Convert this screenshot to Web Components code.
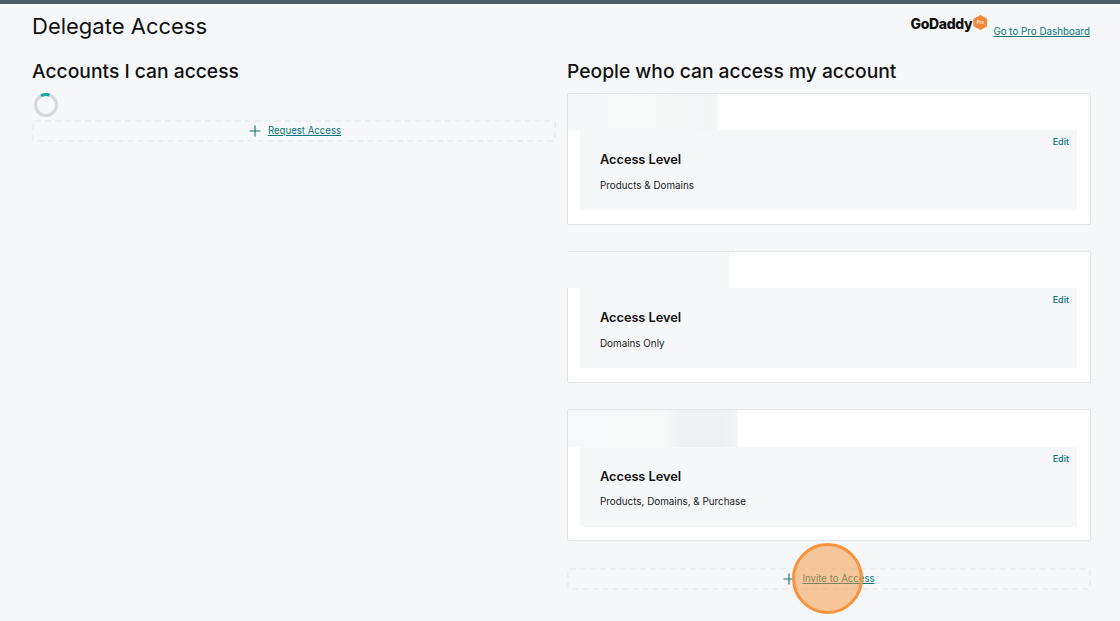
<!DOCTYPE html>
<html>
<head>
<meta charset="utf-8">
<title>Delegate Access</title>
<style>
	html, body { margin: 0; padding: 0; height: 100%; }
	body {
		background: #f5f7f8;
		color: #111;
		font-family: Inter, "Liberation Sans", sans-serif;
		overflow: hidden;
	}
</style>
</head>
<body>
<delegate-page>
	<page-header slot="header" title="Delegate Access" link="Go to Pro Dashboard"></page-header>
	<access-column slot="left" title="Accounts I can access">
		<load-spinner></load-spinner>
		<add-box label="Request Access"></add-box>
	</access-column>
	<access-column slot="right" title="People who can access my account">
		<access-card level="Products &amp; Domains" mask="one"></access-card>
		<access-card level="Domains Only" mask="two"></access-card>
		<access-card level="Products, Domains, &amp; Purchase" mask="three"></access-card>
		<add-box label="Invite to Access" invite></add-box>
	</access-column>
	<click-marker></click-marker>
</delegate-page>

<script>
const TEAL = '#09757a';

class DelegatePage extends HTMLElement {
	constructor() {
		super();
		const shadowRoot = this.attachShadow({ mode: 'open' });
		shadowRoot.innerHTML = `
			<style>
				:host {
					display: block;
					position: relative;
					height: 621px;
					box-sizing: border-box;
					border-top: 4px solid #4a5c65;
				}
				.main {
					display: grid;
					grid-template-columns: 524px 524px;
					column-gap: 11px;
					padding: 0 29px 0 32px;
				}
			</style>
			<slot name="header"></slot>
			<div class="main">
				<slot name="left"></slot>
				<slot name="right"></slot>
			</div>
			<slot></slot>
		`;
	}
}

class PageHeader extends HTMLElement {
	constructor() {
		super();
		const shadowRoot = this.attachShadow({ mode: 'open' });
		shadowRoot.innerHTML = `
			<style>
				:host {
					display: flex;
					justify-content: space-between;
					height: 51px;
					padding: 0 30px 0 32px;
				}
				h1 {
					margin: 7px 0 0;
					font-size: 22px;
					line-height: 30px;
					font-weight: 400;
					color: #111;
				}
				.right {
					display: flex;
					align-items: flex-start;
					padding-top: 10px;
				}
				.logo {
					font-size: 14px;
					line-height: 20px;
					font-weight: 800;
					letter-spacing: -0.35px;
					color: #111;
				}
				.pro {
					width: 14px;
					height: 15px;
					margin: 1px 0 0 1px;
					background: #f08a3c;
					clip-path: polygon(50% 0, 100% 25%, 100% 75%, 50% 100%, 0 75%, 0 25%);
					color: #ffe4c9;
					font-size: 4.5px;
					font-weight: 700;
					line-height: 15px;
					text-align: center;
				}
				a {
					margin: 11px 0 0 6px;
					color: ${TEAL};
					font-size: 9.8px;
					line-height: 14px;
					text-decoration: underline;
				}
			</style>
			<h1>${this.getAttribute('title')}</h1>
			<div class="right">
				<span class="logo">GoDaddy</span>
				<span class="pro">Pro</span>
				<a href="#">${this.getAttribute('link')}</a>
			</div>
		`;
	}
}

class AccessColumn extends HTMLElement {
	constructor() {
		super();
		const shadowRoot = this.attachShadow({ mode: 'open' });
		shadowRoot.innerHTML = `
			<style>
				:host { display: block; min-width: 0; }
				h2 {
					margin: 3px 0 9px;
					font-size: 19.25px;
					line-height: 26px;
					font-weight: 500;
					color: #111;
				}
				.body { display: flex; flex-direction: column; }
			</style>
			<h2>${this.getAttribute('title')}</h2>
			<div class="body"><slot></slot></div>
		`;
	}
}

class AccessCard extends HTMLElement {
	constructor() {
		super();
		const shadowRoot = this.attachShadow({ mode: 'open' });
		shadowRoot.innerHTML = `
			<style>
				:host {
					display: block;
					height: 131.6px;
					box-sizing: border-box;
					margin-bottom: 26.55px;
					background: #fff;
					border: 1px solid #e1e4e6;
					border-radius: 2px;
					position: relative;
				}
				.mask { height: 36.3px; }
				.mask.one { width: 149px; background: linear-gradient(90deg, #f6f7f8 0, #f7f8f8 50%, #f4f5f6 100%); }
				.mask.two { width: 163px; margin-left: -2px; background: #f6f7f8; }
				.mask.three { width: 169px; background: linear-gradient(90deg, #f7f8f9 0, #f7f8f8 55%, #eeeff0 68%, #eeeff0 92%, #f2f3f4 100%); }
				.panel {
					display: flex;
					justify-content: space-between;
					height: 80px;
					margin: 0 13px 0 12px;
					padding: 0 8px 0 20px;
					background: #f5f7f8;
				}
				h3 {
					margin: 21px 0 0;
					font-size: 12.8px;
					line-height: 18px;
					font-weight: 600;
					letter-spacing: -0.05px;
					color: #111;
				}
				p {
					margin: 8.5px 0 0;
					font-size: 9.85px;
					line-height: 14px;
					color: #222;
				}
				a {
					margin-top: 6px;
					color: ${TEAL};
					font-size: 9px;
					line-height: 12px;
					font-weight: 500;
					text-decoration: none;
				}
			</style>
			<div class="mask ${this.getAttribute('mask')}"></div>
			<div class="panel">
				<div>
					<h3>Access Level</h3>
					<p>${this.getAttribute('level').replace(/&/g, '&amp;')}</p>
				</div>
				<a href="#">Edit</a>
			</div>
		`;
	}
}

class AddBox extends HTMLElement {
	constructor() {
		super();
		const shadowRoot = this.attachShadow({ mode: 'open' });
		shadowRoot.innerHTML = `
			<style>
				:host {
					display: flex;
					justify-content: center;
					align-items: center;
					gap: 7px;
					height: 22px;
					box-sizing: border-box;
					margin-top: 1px;
					padding-left: 2px;
					border: 2px dashed #ebedee;
					border-radius: 3px;
				}
				:host([invite]) { margin-top: 0.5px; padding-left: 0; }
				svg { display: block; }
				a {
					color: ${TEAL};
					font-size: 9.65px;
					line-height: 14px;
					text-decoration: underline;
				}
			</style>
			<svg width="12" height="12" viewBox="0 0 12 12" fill="none" stroke="#1f6f75" stroke-width="1.1">
				<path d="M6 0.5V11.5M0.5 6H11.5"/>
			</svg>
			<a href="#">${this.getAttribute('label')}</a>
		`;
	}
}

class LoadSpinner extends HTMLElement {
	constructor() {
		super();
		const shadowRoot = this.attachShadow({ mode: 'open' });
		shadowRoot.innerHTML = `
			<style>
				:host { display: block; height: 26px; margin-left: 2px; }
				svg { display: block; }
			</style>
			<svg width="24" height="24" viewBox="0 0 24 24" fill="none" stroke-width="3">
				<circle cx="12" cy="12" r="10.5" stroke="#d5d7d8"/>
				<path d="M7 2.8A10.5 10.5 0 0 1 15.5 2.1" stroke="#17a79c"/>
			</svg>
		`;
	}
}

// orange click highlight from the screen recording tool, sits over the invite box
class ClickMarker extends HTMLElement {
	constructor() {
		super();
		const shadowRoot = this.attachShadow({ mode: 'open' });
		shadowRoot.innerHTML = `
			<style>
				:host {
					position: absolute;
					left: 792px;
					top: 539px;
					width: 71px;
					height: 71px;
					box-sizing: border-box;
					border: 3px solid #f8933a;
					border-radius: 50%;
					background: rgba(248, 147, 58, 0.5);
				}
			</style>
		`;
	}
}

customElements.define('delegate-page', DelegatePage);
customElements.define('page-header', PageHeader);
customElements.define('access-column', AccessColumn);
customElements.define('access-card', AccessCard);
customElements.define('add-box', AddBox);
customElements.define('load-spinner', LoadSpinner);
customElements.define('click-marker', ClickMarker);
</script>
</body>
</html>
